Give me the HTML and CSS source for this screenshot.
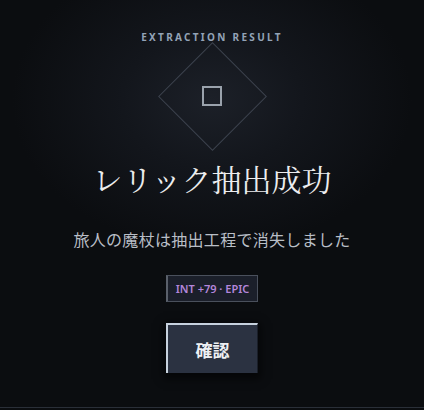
FILE: index.html
```html
<!DOCTYPE html>
<html lang="ja">
<head>
<meta charset="utf-8">
<link rel="stylesheet" href="styles.css">
</head>
<body>
<main class="screen">
  <div class="label">EXTRACTION RESULT</div>
  <div class="emblem">
    <div class="diamond"></div>
    <div class="core"></div>
  </div>
  <h1 class="title">レリック抽出成功</h1>
  <p class="desc">旅人の魔杖は抽出工程で消失しました</p>
  <div class="badge">INT +79 · EPIC</div>
  <button class="confirm">確認</button>
  <div class="footer"></div>
</main>
</body>
</html>
```
FILE: styles.css
```css
html, body {
  margin: 0;
  padding: 0;
  background: #0b0d10;
}
.screen {
  width: 424px;
  height: 410px;
  box-sizing: border-box;
  padding-top: 31px;
  display: flex;
  flex-direction: column;
  align-items: center;
  position: relative;
  background: radial-gradient(ellipse 200px 150px at 212px 100px, #1c2028 0%, #13161c 45%, #0b0d10 100%);
  font-family: "Noto Sans CJK JP", "Noto Sans", sans-serif;
  overflow: hidden;
}
.label {
  font-family: "Noto Sans", "DejaVu Sans", sans-serif;
  font-size: 10px;
  line-height: 12px;
  font-weight: 700;
  letter-spacing: 2.3px;
  color: #93a3b6;
}
.emblem {
  width: 108px;
  height: 108px;
  margin-top: -1px;
  display: flex;
  align-items: center;
  justify-content: center;
  position: relative;
}
.diamond {
  position: absolute;
  width: 75px;
  height: 75px;
  border: 1px solid #3c424d;
  transform: rotate(45deg);
}
.core {
  width: 16px;
  height: 16px;
  border: 2px solid #9aa2ac;
}
.title {
  margin: 8px 0 0;
  font-family: "Noto Serif CJK JP", serif;
  font-weight: 400;
  font-size: 30px;
  line-height: 40px;
  letter-spacing: 0;
  color: #ecedee;
}
.desc {
  margin: 31px 0 0;
  font-size: 16px;
  line-height: 20px;
  letter-spacing: 0.3px;
  color: #b9bec6;
}
.badge {
  margin-top: 26px;
  box-sizing: border-box;
  width: 92px;
  height: 27px;
  display: flex;
  align-items: center;
  justify-content: center;
  border: 1px solid #4a505c;
  border-left: 2px solid #5a606b;
  background: #1b1f2a;
  color: #b486da;
  font-family: "Noto Sans", "DejaVu Sans", sans-serif;
  font-size: 11px;
  font-weight: 600;
}
.confirm {
  margin-top: 21px;
  box-sizing: border-box;
  width: 92px;
  height: 50px;
  background: #2b3241;
  border: none;
  border-top: 2px solid #c7d2de;
  border-left: 2px solid #c7d2de;
  border-right: 1px solid #1a1f29;
  color: #eef0f3;
  font-family: "Noto Sans CJK JP", sans-serif;
  font-size: 17px;
  font-weight: 700;
  box-shadow: 0 3px 8px 3px rgba(0,0,0,0.55);
  padding: 0;
}
.footer {
  position: absolute;
  left: 0;
  right: 0;
  bottom: 2px;
  height: 1px;
  background: #2a2f38;
}
```
